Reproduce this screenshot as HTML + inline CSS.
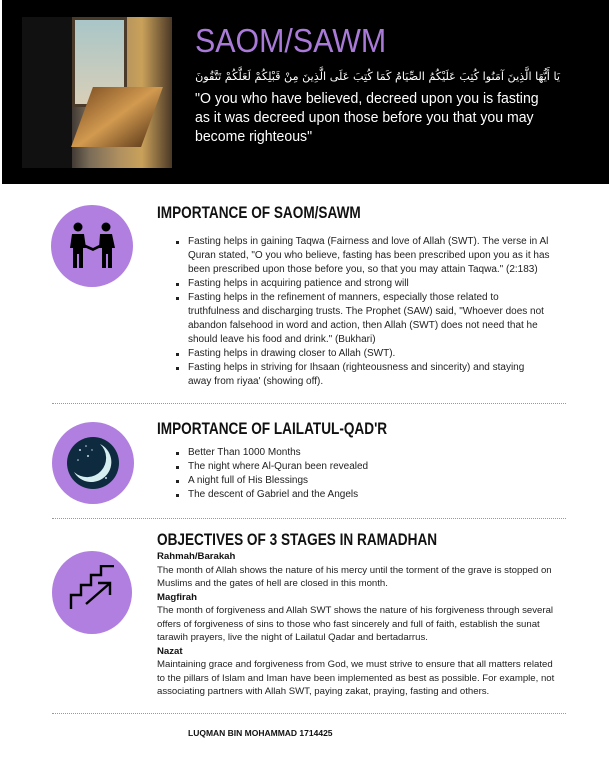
<!DOCTYPE html>
<html><head><meta charset="utf-8"><style>
*{margin:0;padding:0;box-sizing:border-box}
body{width:609px;height:778px;background:#fff;font-family:"Liberation Sans",sans-serif;color:#222;position:relative;overflow:hidden}
.hdr{position:absolute;left:2px;top:0;width:607px;height:184px;background:#000}
.img{position:absolute;left:22px;top:17px;width:150px;height:151px;background:linear-gradient(90deg,#0d0d10 0%,#1c1a1c 30%,#3a3430 32%,#7a6c58 45%,#b09060 65%,#c9a15a 80%,#4a3826 100%);overflow:hidden}
.img .win{position:absolute;left:50px;top:0;width:55px;height:90px;background:linear-gradient(180deg,#a9c6c8,#d8cfb8);border:3px solid #4a3a2a}
.img .book{position:absolute;left:60px;top:70px;width:70px;height:60px;background:linear-gradient(135deg,#8a5a2a,#d29a50 50%,#6a4520);transform:skewX(-20deg)}
.img .sh{position:absolute;left:0;top:0;width:50px;height:151px;background:#111}
.t{position:absolute;white-space:nowrap}
.title{left:195px;top:22px;font-size:33px;color:#a97ad8;transform:scaleX(.92);transform-origin:left}
.ar{right:49px;top:70px;font-size:11.2px;color:#fff;font-family:"DejaVu Sans",sans-serif;direction:rtl}
.en{left:195px;top:89px;font-size:15px;line-height:19px;color:#fff;transform:scaleX(.94);transform-origin:left}
.circ{position:absolute;border-radius:50%;background:#b07fe0}
h2{position:absolute;left:157px;font-size:17px;font-weight:bold;color:#111;white-space:nowrap;transform:scaleX(.8);transform-origin:left}
ul{position:absolute;left:188px;font-size:10px;line-height:14px;color:#222;list-style:none;white-space:nowrap}
ul li{position:relative}
ul li:before{content:"";position:absolute;left:-12px;top:6px;width:3px;height:3px;background:#222}
.dot{position:absolute;left:52px;width:514px;border-top:1px dotted #999}
.p{position:absolute;left:157px;font-size:9.6px;line-height:13.5px;color:#222;white-space:nowrap}
.p b{color:#111}
</style></head><body>
<div class="hdr"></div>
<div class="img"><div class="sh"></div><div class="win"></div><div class="book"></div></div>
<div class="t title">SAOM/SAWM</div>
<div class="t ar">يَا أَيُّهَا الَّذِينَ آمَنُوا كُتِبَ عَلَيْكُمُ الصِّيَامُ كَمَا كُتِبَ عَلَى الَّذِينَ مِنْ قَبْلِكُمْ لَعَلَّكُمْ تَتَّقُونَ</div>
<div class="t en">"O you who have believed, decreed upon you is fasting<br>as it was decreed upon those before you that you may<br>become righteous"</div>

<div class="circ" style="left:51px;top:205px;width:82px;height:82px"></div>
<svg style="position:absolute;left:66px;top:222px" width="54" height="48" viewBox="0 0 54 48" fill="#000">
<circle cx="12" cy="5" r="4.5"/><circle cx="40" cy="5" r="4.5"/>
<path d="M6 12h12l2 14-3 0v20h-4v-14h-2v14h-4v-20h-3z"/>
<path d="M34 12h12l3 14h-3v20h-4v-14h-2v14h-4v-20h-3z"/>
<path d="M18 22l9 4 8-4v3l-8 4-9-4z"/>
</svg>
<h2 style="top:203px">IMPORTANCE OF SAOM/SAWM</h2>
<ul style="top:235px">
<li>Fasting helps in gaining Taqwa (Fairness and love of Allah (SWT). The verse in Al<br>Quran stated, "O you who believe, fasting has been prescribed upon you as it has<br>been prescribed upon those before you, so that you may attain Taqwa." (2:183)</li>
<li>Fasting helps in acquiring patience and strong will</li>
<li>Fasting helps in the refinement of manners, especially those related to<br>truthfulness and discharging trusts. The Prophet (SAW) said, "Whoever does not<br>abandon falsehood in word and action, then Allah (SWT) does not need that he<br>should leave his food and drink." (Bukhari)</li>
<li>Fasting helps in drawing closer to Allah (SWT).</li>
<li>Fasting helps in striving for Ihsaan (righteousness and sincerity) and staying<br>away from riyaa' (showing off).</li>
</ul>
<div class="dot" style="top:403px"></div>

<div class="circ" style="left:52px;top:422px;width:82px;height:82px"></div>
<svg style="position:absolute;left:66px;top:436px" width="54" height="54" viewBox="0 0 54 54">
<circle cx="27" cy="27" r="26" fill="#0e2a3e"/>
<path d="M34 8a20 20 0 1 1-26 28a17 17 0 0 0 26-28z" fill="#d6eef0"/>
<g fill="#cde"><circle cx="14" cy="14" r="1"/><circle cx="20" cy="10" r=".8"/><circle cx="12" cy="24" r=".8"/><circle cx="22" cy="20" r="1"/><circle cx="40" cy="42" r="1"/><circle cx="26" cy="14" r=".7"/></g>
</svg>
<h2 style="top:419px">IMPORTANCE OF LAILATUL-QAD'R</h2>
<ul style="top:446px">
<li>Better Than 1000 Months</li>
<li>The night where Al-Quran been revealed</li>
<li>A night full of His Blessings</li>
<li>The descent of Gabriel and the Angels</li>
</ul>
<div class="dot" style="top:518px"></div>

<div class="circ" style="left:52px;top:551px;width:80px;height:83px"></div>
<svg style="position:absolute;left:68px;top:565px" width="50" height="44" viewBox="0 0 50 44" fill="none" stroke="#000" stroke-width="2.4">
<path d="M3 44v-14h10v-10h10v-10h10v-9h13"/><path d="M18 39l23-20"/><path d="M30 18h12v12"/>
</svg>
<h2 style="top:530px">OBJECTIVES OF 3 STAGES IN RAMADHAN</h2>
<div class="p" style="top:550px"><b>Rahmah/Barakah</b><br>The month of Allah shows the nature of his mercy until the torment of the grave is stopped on<br>Muslims and the gates of hell are closed in this month.<br><b>Magfirah</b><br>The month of forgiveness and Allah SWT shows the nature of his forgiveness through several<br>offers of forgiveness of sins to those who fast sincerely and full of faith, establish the sunat<br>tarawih prayers, live the night of Lailatul Qadar and bertadarrus.<br><b>Nazat</b><br>Maintaining grace and forgiveness from God, we must strive to ensure that all matters related<br>to the pillars of Islam and Iman have been implemented as best as possible. For example, not<br>associating partners with Allah SWT, paying zakat, praying, fasting and others.</div>
<div class="dot" style="top:713px"></div>
<div class="t" style="left:188px;top:728px;font-size:8.5px;font-weight:bold;color:#111">LUQMAN BIN MOHAMMAD 1714425</div>
</body></html>
